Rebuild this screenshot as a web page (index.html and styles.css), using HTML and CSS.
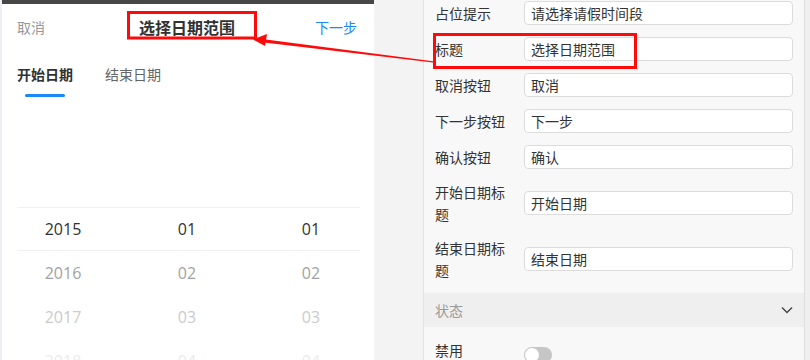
FILE: index.html
```html
<!DOCTYPE html>
<html lang="zh-CN">
<head>
<meta charset="utf-8">
<title>选择日期范围</title>
<link rel="stylesheet" href="styles.css">
</head>
<body>
<div class="page">
  <section class="phone">
    <div class="topbar"></div>
    <div class="header">
      <span class="cancel">取消</span>
      <span class="title">选择日期范围</span>
      <span class="next">下一步</span>
    </div>
    <div class="tabs">
      <div class="tab active"><span>开始日期</span><i class="line"></i></div>
      <div class="tab"><span>结束日期</span></div>
    </div>
    <div class="picker">
      <div class="row selected"><span>2015</span><span>01</span><span>01</span></div>
      <div class="row r2"><span>2016</span><span>02</span><span>02</span></div>
      <div class="row r3"><span>2017</span><span>03</span><span>03</span></div>
      <div class="row r4"><span>2018</span><span>04</span><span>04</span></div>
    </div>
  </section>
  <div class="gutter"></div>
  <aside class="props">
    <div class="item"><label>占位提示</label><div class="input">请选择请假时间段</div></div>
    <div class="item"><label>标题</label><div class="input">选择日期范围</div></div>
    <div class="item"><label>取消按钮</label><div class="input">取消</div></div>
    <div class="item"><label>下一步按钮</label><div class="input">下一步</div></div>
    <div class="item"><label>确认按钮</label><div class="input">确认</div></div>
    <div class="item"><label>开始日期标题</label><div class="input">开始日期</div></div>
    <div class="item"><label>结束日期标题</label><div class="input">结束日期</div></div>
    <div class="section">
      <span>状态</span>
      <svg class="chev" width="12" height="8" viewBox="0 0 12 8"><path d="M1 1.5 L6 6.5 L11 1.5" fill="none" stroke="#444" stroke-width="1.4"/></svg>
    </div>
    <div class="item top"><label>禁用</label><div class="switch"><i class="knob"></i></div></div>
  </aside>
  <div class="edge"></div>
</div>
<svg class="annot" width="810" height="360" viewBox="0 0 810 360">
  <rect x="128.5" y="12.5" width="127" height="25.5" fill="none" stroke="#ff0a0a" stroke-width="3"/>
  <rect x="434.5" y="34.5" width="201" height="33" fill="none" stroke="#ff0a0a" stroke-width="3"/>
  <polygon points="262,39 433,61.2 433,62.6 262,42.2" fill="#ff0a0a"/>
  <polygon points="253,39.5 267,34 265,46" fill="#ff0a0a"/>
</svg>
</body>
</html>
```
FILE: styles.css
```css
* { box-sizing: border-box; margin: 0; padding: 0; }
html, body { width: 810px; height: 360px; overflow: hidden; }
body {
  background: #f2f2f2;
  font-family: "Open Sans", "Noto Sans CJK SC", sans-serif;
  font-size: 14px;
  color: #333;
}
.page { display: flex; height: 360px; }

.phone {
  width: 374px;
  flex: none;
  background: #fff;
  border-left: 2px solid #eef0f4;
  display: flex;
  flex-direction: column;
  overflow: hidden;
}
.phone > * { flex: none; }
.topbar { height: 4px; background: #474747; margin-left: -2px; }
.header {
  height: 48px;
  display: grid;
  grid-template-columns: 1fr auto 1fr;
  align-items: center;
  padding: 0 17px 0 15px;
  line-height: 22px;
}
.cancel { color: #969799; justify-self: start; }
.title { font-size: 16px; font-weight: 700; color: #323233; }
.next { color: #1989fa; justify-self: end; }

.tabs { display: flex; padding: 12px 0 0 15px; height: 45px; }
.tab { display: flex; flex-direction: column; align-items: center; margin-right: 32px; line-height: 22px; color: #646566; }
.tab.active { color: #323233; font-weight: 700; }
.tab .line { display: block; width: 40px; height: 3px; border-radius: 3px; background: #1989fa; margin-top: 8px; }

.picker { padding-top: 110px; margin-left: -1px; }
.row { display: flex; height: 44px; align-items: center; font-size: 16px; color: #323233; position: relative; }
.row span { width: 124px; text-align: center; }
.row.selected::before,
.row.selected::after {
  content: "";
  position: absolute;
  left: 16px;
  right: 14px;
  height: 1px;
  background: #f0f1f3;
}
.row.selected::before { top: 0; }
.row.selected::after { bottom: 0; }
.row.r2 { color: #a2a2a2; }
.row.r3 { color: #cbcbcb; }
.row.r4 { color: #ececec; }

.gutter { width: 50px; flex: none; background: #f3f3f3; border-right: 1px solid #e2e2e2; }

.props {
  width: 380px;
  flex: none;
  background: #f8f8f8;
  padding-top: 1px;
  display: flex;
  flex-direction: column;
  gap: 12px;
  font-family: "Noto Sans CJK SC", sans-serif;
}
.props > * { flex: none; }
.item { display: flex; align-items: center; padding: 0 11px 0 11px; }
.item.top { align-items: flex-start; }
.item label { width: 80px; margin-right: 9px; line-height: 22px; color: #333; flex: none; }
.input {
  flex: 1;
  height: 24px;
  background: #fff;
  border: 1px solid #dcdcdc;
  border-radius: 4px;
  padding: 0 6px;
  line-height: 22px;
  color: #333;
}
.section {
  height: 34px;
  background: #efefef;
  display: flex;
  align-items: center;
  justify-content: space-between;
  padding: 0 11px 0 11px;
  color: #999;
}
.chev { display: block; }
.switch {
  width: 28px; height: 16px; border-radius: 8px;
  background: #c6c6c6; margin-top: 8px; padding: 1px;
}
.knob { display: block; width: 14px; height: 14px; border-radius: 50%; background: #fff; }

.edge { flex: 1; background: #efefef; border-left: 1px solid #dedede; }

.annot { position: absolute; left: 0; top: 0; pointer-events: none; }
```
